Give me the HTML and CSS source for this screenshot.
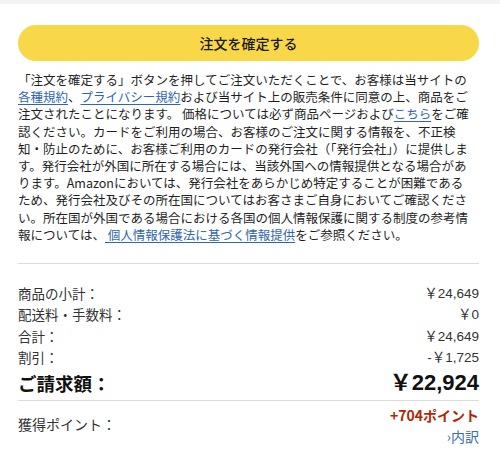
FILE: index.html
```html
<!DOCTYPE html>
<html lang="ja">
<head>
<meta charset="utf-8">
<link rel="stylesheet" href="styles.css">
</head>
<body>
<div class="topband"></div>
<main class="wrap">
  <button class="place-order">注文を確定する</button>
  <p class="legal">「注文を確定する」ボタンを押してご注文いただくことで、お客様は当サイトの<br><a href="#">各種規約</a>、<a href="#">プライバシー規約</a>および当サイト上の販売条件に同意の上、商品をご<br>注文されたことになります。 価格については必ず商品ページおよび<a href="#">こちら</a>をご確<br>認ください。カードをご利用の場合、お客様のご注文に関する情報を、不正検<br>知・防止のために、お客様ご利用のカードの発行会社（「発行会社」）に提供しま<br>す。発行会社が外国に所在する場合には、当該外国への情報提供となる場合があ<br>ります。Amazonにおいては、発行会社をあらかじめ特定することが困難である<br>ため、発行会社及びその所在国についてはお客さまご自身においてご確認くださ<br>い。所在国が外国である場合における各国の個人情報保護に関する制度の参考情<br>報については、<a href="#"> 個人情報保護法に基づく情報提供</a>をご参照ください。</p>
  <hr class="rule">
  <div class="summary">
    <div class="row"><span>商品の小計：</span><span class="num">￥24,649</span></div>
    <div class="row"><span>配送料・手数料：</span><span class="num">￥0</span></div>
    <div class="row"><span>合計：</span><span class="num">￥24,649</span></div>
    <div class="row"><span>割引：</span><span class="num">-￥1,725</span></div>
    <div class="row total"><span>ご請求額：</span><span class="num">￥22,924</span></div>
  </div>
  <hr class="rule rule2">
  <div class="points">
    <span class="plabel">獲得ポイント：</span>
    <div class="pright">
      <span class="pval">+704ポイント</span>
      <a href="#" class="detail">›内訳</a>
    </div>
  </div>
</main>
</body>
</html>
```
FILE: styles.css
```css
html, body {
  margin: 0;
  padding: 0;
  background: #fff;
}
body {
  font-family: "Noto Sans CJK JP", "Liberation Sans", sans-serif;
  color: #222;
}
.topband {
  height: 4px;
  background: #f3f3f3;
}
.wrap {
  padding: 21px 21px 0 18px;
}
.place-order {
  display: block;
  width: 100%;
  height: 36px;
  border: none;
  border-radius: 18px;
  background: #f8d748;
  color: #1a1a1a;
  font-family: "Noto Sans CJK JP", sans-serif;
  font-size: 14px;
  font-weight: 500;
  padding: 0;
}
.legal {
  margin: 10px 0 0;
  font-size: 12.5px;
  line-height: 17.2px;
  color: #1f1f1f;
  white-space: nowrap;
}
.legal a {
  color: #2f66ad;
  text-decoration: underline;
  text-underline-offset: 2px;
}
.rule {
  border: none;
  border-top: 1px solid #dcdcdc;
  margin: 20px 0 0;
}
.summary {
  padding-top: 19px;
}
.row {
  display: flex;
  justify-content: space-between;
  align-items: center;
  font-size: 13.5px;
  line-height: 21.4px;
  color: #333;
}
.num {
  font-family: "Liberation Sans", "Noto Sans CJK JP", sans-serif;
  font-size: 13.5px;
}
.row.total {
  margin-top: 1px;
  line-height: 26px;
  color: #111;
}
.row.total span:first-child {
  font-size: 18.5px;
  font-weight: 700;
}
.row.total .num {
  font-size: 22px;
  font-weight: 700;
}
.rule2 {
  margin-top: 4px;
}
.points {
  display: flex;
  justify-content: space-between;
  align-items: center;
  padding-top: 4px;
}
.plabel {
  font-size: 14px;
  color: #333;
  margin-bottom: 3px;
}
.pright {
  display: flex;
  flex-direction: column;
  align-items: flex-end;
}
.pval {
  font-size: 14px;
  font-weight: 700;
  line-height: 21px;
  color: #b12704;
}
.detail {
  font-size: 14px;
  line-height: 20px;
  color: #3a6db3;
  text-decoration: none;
}
```
